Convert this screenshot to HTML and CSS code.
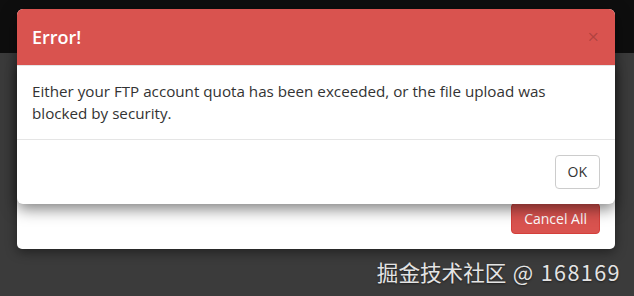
FILE: index.html
```html
<!DOCTYPE html>
<html>
<head>
<meta charset="utf-8">
<link rel="stylesheet" href="styles.css">
</head>
<body>
<div class="topbar"></div>
<main class="page">
  <section class="card">
    <button class="btn btn-danger">Cancel All</button>
  </section>
</main>
<div class="modal">
  <div class="modal-header">
    <h4 class="modal-title">Error!</h4>
    <span class="close">×</span>
  </div>
  <div class="modal-body">Either your FTP account quota has been exceeded, or the file upload was blocked by security.</div>
  <div class="modal-footer">
    <button class="btn btn-default">OK</button>
  </div>
</div>
<div class="watermark">掘金技术社区<span class="wm-id"> @ 168169</span></div>
</body>
</html>
```
FILE: styles.css
```css
html, body {
  margin: 0;
  padding: 0;
}
body {
  width: 634px;
  height: 296px;
  background: #3b3b3b;
  font-family: "Open Sans", "Liberation Sans", sans-serif;
  position: relative;
  overflow: hidden;
}
.topbar {
  height: 53px;
  background: #0e0e0e;
}
.page {
  padding: 10px 19px 0 17px;
}
.card {
  height: 186px;
  background: #fff;
  border-radius: 5px;
  box-shadow: 0 3px 12px rgba(0,0,0,0.45);
  display: flex;
  justify-content: flex-end;
  align-items: flex-end;
  padding: 0 15px 15px 0;
  box-sizing: border-box;
}
.btn {
  font-family: "Open Sans", "Liberation Sans", sans-serif;
  font-size: 14px;
  border-radius: 4px;
  border: 1px solid transparent;
  cursor: pointer;
}
.btn-danger {
  background: #d9534f;
  border-color: #d43f3a;
  color: #fff;
  padding: 5px 12px;
  line-height: 19px;
}
.btn-default {
  background: #fff;
  border-color: #ccc;
  color: #333;
  padding: 6px 12px;
  line-height: 20px;
}
.modal {
  position: absolute;
  top: 9px;
  left: 17px;
  width: 598px;
  background: #fff;
  border-radius: 6px;
  box-shadow: 0 5px 15px rgba(0,0,0,0.5);
  overflow: hidden;
}
.modal-header {
  background: #d9534f;
  color: #fff;
  padding: 15px;
  display: flex;
  justify-content: space-between;
  align-items: center;
  border-bottom: 1px solid #e5e5e5;
}
.modal-title {
  margin: 0;
  font-size: 18px;
  font-weight: 600;
  line-height: 26px;
}
.close {
  font-size: 20px;
  font-weight: 400;
  line-height: 1;
  color: rgba(0,0,0,0.2);
  margin-right: 1px;
}
.modal-body {
  padding: 15px;
  font-size: 15.2px;
  line-height: 21.5px;
  color: #333;
}
.modal-footer {
  border-top: 1px solid #e5e5e5;
  padding: 15px;
  display: flex;
  justify-content: flex-end;
}
.watermark {
  position: absolute;
  right: 13px;
  bottom: 10px;
  font-family: "Noto Sans CJK SC", "Noto Sans", sans-serif;
  font-size: 21.6px;
  line-height: 28px;
  color: #e4e4e4;
  text-shadow: 0 1px 2px rgba(0,0,0,0.5);
}
.wm-id {
  letter-spacing: 1.4px;
}
```
